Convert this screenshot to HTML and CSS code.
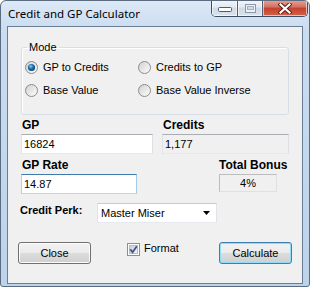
FILE: index.html
```html
<!DOCTYPE html>
<html>
<head>
  <title>Credit and GP Calculator</title>
  <link rel="stylesheet" href="styles.css">
</head>
<body>

  <svg class="defs" width="0" height="0">
    <defs>
      <linearGradient id="radio-bg" x1="0" y1="0" x2="1" y2="1">
        <stop offset="0" stop-color="#cfcfcf"/>
        <stop offset="1" stop-color="#ffffff"/>
      </linearGradient>
      <radialGradient id="radio-dot" cx="0.4" cy="0.35" r="0.7">
        <stop offset="0" stop-color="#8fd0f5"/>
        <stop offset="0.45" stop-color="#1f75b3"/>
        <stop offset="1" stop-color="#0b3f6b"/>
      </radialGradient>
      <linearGradient id="check-bg" x1="0" y1="0" x2="1" y2="1">
        <stop offset="0" stop-color="#c6cbd3"/>
        <stop offset="1" stop-color="#f7f7f7"/>
      </linearGradient>
    </defs>
  </svg>

  <div class="window">
    <div class="titlebar">
      <span class="title">Credit and GP Calculator</span>
      <div class="caption-buttons">
        <span class="cap-btn cap-min">
          <svg width="14" height="6" viewBox="0 0 14 6"><rect x="0.5" y="0.5" width="13" height="4" rx="1" fill="#fdfdfd" stroke="#4b5d73"/></svg>
        </span>
        <span class="cap-btn cap-max">
          <svg width="11" height="9" viewBox="0 0 11 9"><rect x="0.5" y="0.5" width="10" height="8" fill="#eef2f6" stroke="#8a9aae"/><rect x="2.5" y="2.5" width="6" height="3" fill="#d3dbe5" stroke="#a3b0c0"/></svg>
        </span>
        <span class="cap-btn cap-close">
          <svg width="14" height="11" viewBox="0 0 14 11">
            <path d="M2.5 1.5 L11.5 9.5 M11.5 1.5 L2.5 9.5" stroke="#5a1f18" stroke-width="4.2" stroke-linecap="square"/>
            <path d="M2.5 1.5 L11.5 9.5 M11.5 1.5 L2.5 9.5" stroke="#ffffff" stroke-width="2.2" stroke-linecap="square"/>
          </svg>
        </span>
      </div>
    </div>

    <div class="client">
      <fieldset class="mode">
        <legend>Mode</legend>
        <div class="radio-grid">
          <label class="radio">
            <svg width="13" height="13" viewBox="0 0 13 13"><circle cx="6.5" cy="6.5" r="6" fill="url(#radio-bg)" stroke="#8c8c8c"/><circle cx="6.5" cy="6.5" r="3.6" fill="url(#radio-dot)"/></svg>
            GP to Credits
          </label>
          <label class="radio">
            <svg width="13" height="13" viewBox="0 0 13 13"><circle cx="6.5" cy="6.5" r="6" fill="url(#radio-bg)" stroke="#8c8c8c"/></svg>
            Credits to GP
          </label>
          <label class="radio">
            <svg width="13" height="13" viewBox="0 0 13 13"><circle cx="6.5" cy="6.5" r="6" fill="url(#radio-bg)" stroke="#8c8c8c"/></svg>
            Base Value
          </label>
          <label class="radio">
            <svg width="13" height="13" viewBox="0 0 13 13"><circle cx="6.5" cy="6.5" r="6" fill="url(#radio-bg)" stroke="#8c8c8c"/></svg>
            Base Value Inverse
          </label>
        </div>
      </fieldset>

      <div class="row-gp">
        <div class="field">
          <div class="field-label">GP</div>
          <input type="text" class="textbox" value="16824">
        </div>
        <div class="field">
          <div class="field-label">Credits</div>
          <input type="text" class="textbox readonly" value="1,177" readonly>
        </div>
      </div>

      <div class="row-rate">
        <div class="field">
          <div class="field-label">GP Rate</div>
          <input type="text" class="textbox focused" value="14.87">
        </div>
        <div class="field">
          <div class="field-label">Total Bonus</div>
          <div class="bonus">4%</div>
        </div>
      </div>

      <div class="row-perk">
        <span class="perk-label">Credit Perk:</span>
        <div class="combo">
          <span>Master Miser</span>
          <svg width="8" height="4" viewBox="0 0 8 4"><path d="M0 0 H7 L3.5 4 Z" fill="#000"/></svg>
        </div>
      </div>

      <div class="row-buttons">
        <button class="btn">Close</button>
        <label class="check">
          <svg width="13" height="13" viewBox="0 0 13 13">
            <rect x="0.5" y="0.5" width="12" height="12" fill="#fff" stroke="#8f8f8f"/>
            <rect x="2.5" y="2.5" width="8" height="8" fill="url(#check-bg)" stroke="#b8bcc4"/>
            <path d="M3.3 6.4 L5.6 9.2 L9.8 3.2" fill="none" stroke="#3f5687" stroke-width="1.8"/>
          </svg>
          Format
        </label>
        <button class="btn btn-default">Calculate</button>
      </div>
    </div>
  </div>

</body>
</html>
```

FILE: styles.css
```css
body { margin: 0; font-family: "Liberation Sans", Arial, sans-serif; font-size: 11px; color: #000; }
.defs { position: absolute; }

.window {
  width: 310px;
  height: 287px;
  box-sizing: border-box;
  border: 1px solid #5b6b80;
  border-radius: 6px 6px 3px 3px;
  background: linear-gradient(#dce9f7, #cadcf0 30px, #bcd3ec);
  overflow: hidden;
}

.titlebar {
  height: 25px;
  display: flex;
  justify-content: space-between;
  align-items: flex-start;
}
.title {
  font-family: "Noto Sans", sans-serif;
  font-size: 11.5px;
  line-height: 16px;
  margin: 5px 0 0 7px;
}

.caption-buttons {
  display: flex;
  margin: -1px 1px 0 0;
  border: 1px solid #3e4f63;
  border-top: none;
  border-radius: 0 0 5px 5px;
  overflow: hidden;
  height: 16px;
}
.cap-btn {
  display: flex;
  align-items: center;
  justify-content: center;
  background: linear-gradient(#f3f6fa, #e2e9f1 45%, #cfdae7 50%, #d9e3ee);
  box-shadow: inset 0 0 0 1px rgba(255, 255, 255, 0.6);
}
.cap-min { width: 25px; }
.cap-min svg { margin-top: 3px; }
.cap-max { width: 24px; border-left: 1px solid #4e6077; }
.cap-close {
  width: 44px;
  border-left: 1px solid #4e6077;
  background: linear-gradient(#e8a595, #d2705f 45%, #c2402f 50%, #d2634b);
}

.client {
  margin: 0 6px;
  height: 258px;
  box-sizing: border-box;
  border: 1px solid #6b7d92;
  background: #f0f0f0;
}

/* group box */
.mode {
  margin: 14px 13px 0;
  padding: 7px 0 17px 3px;
  border: 1px solid #d5dfe5;
  border-radius: 3px;
  box-shadow: inset 1px 1px 0 #fff;
}
.mode legend {
  margin-left: 2px;
  padding: 0 2px;
  line-height: 13px;
}
.radio-grid {
  display: grid;
  grid-template-columns: 113px auto;
  row-gap: 10px;
}
.radio {
  display: flex;
  align-items: center;
  gap: 5px;
  height: 13px;
  line-height: 13px;
}

.field-label {
  font-weight: bold;
  font-size: 12px;
  line-height: 14px;
  padding-left: 1px;
  margin-bottom: 2px;
  white-space: nowrap;
}
.textbox {
  display: block;
  box-sizing: border-box;
  width: 100%;
  height: 20px;
  margin: 0;
  padding: 0 2px;
  font-family: "Liberation Sans", Arial, sans-serif;
  font-size: 11px;
  color: #000;
  background: #fff;
  border: 1px solid;
  border-color: #abadb3 #dbdfe6 #e3e9ef #e2e3ea;
  outline: none;
}
.textbox.readonly { background: #f0f0f0; }
.textbox.focused { border-color: #3d7bad #a4c9e3 #b7d9ed #b5cfe7; }

.row-gp {
  display: grid;
  grid-template-columns: 132px 127px;
  column-gap: 9px;
  margin: 3px 13px 0;
}
.row-rate {
  display: grid;
  grid-template-columns: 116px 71px;
  column-gap: 81px;
  margin: 4px 13px 0;
}
.bonus {
  box-sizing: border-box;
  width: 58px;
  height: 18px;
  margin-left: 1px;
  line-height: 16px;
  text-align: center;
  border: 1px solid;
  border-color: #bdbdbd #e0e0e0 #e0e0e0 #bdbdbd;
}

.row-perk {
  display: flex;
  align-items: flex-start;
  margin: 9px 0 0 12px;
}
.perk-label {
  width: 77px;
  font-weight: bold;
  line-height: 14px;
}
.combo {
  box-sizing: border-box;
  width: 120px;
  height: 20px;
  display: flex;
  align-items: center;
  justify-content: space-between;
  padding: 0 5px 0 3px;
  background: #fff;
  border: 1px solid;
  border-color: #c9cbd0 #e1e3e8 #e6e9ee #e1e3e8;
}

.row-buttons {
  display: flex;
  align-items: flex-start;
  margin: 19px 10px 0 10px;
}
.btn {
  width: 73px;
  height: 22px;
  padding: 0 0 1px;
  font-family: "Liberation Sans", Arial, sans-serif;
  font-size: 11px;
  color: #000;
  border: 1px solid #707070;
  border-radius: 3px;
  background: linear-gradient(#f2f2f2, #ebebeb 50%, #dddddd 50%, #cfcfcf);
  box-shadow: inset 0 0 0 1px #fcfcfc;
}
.btn-default {
  margin-left: auto;
  border-color: #3c7fb1;
  box-shadow: inset 0 0 0 1px #8fdcf8;
  background: linear-gradient(#f2f2f2, #ebebeb 50%, #dddddd 50%, #cfcfcf);
}
.check {
  display: flex;
  align-items: flex-start;
  gap: 4px;
  margin-left: 36px;
  line-height: 13px;
}
.check svg { margin-top: 1px; }
```
